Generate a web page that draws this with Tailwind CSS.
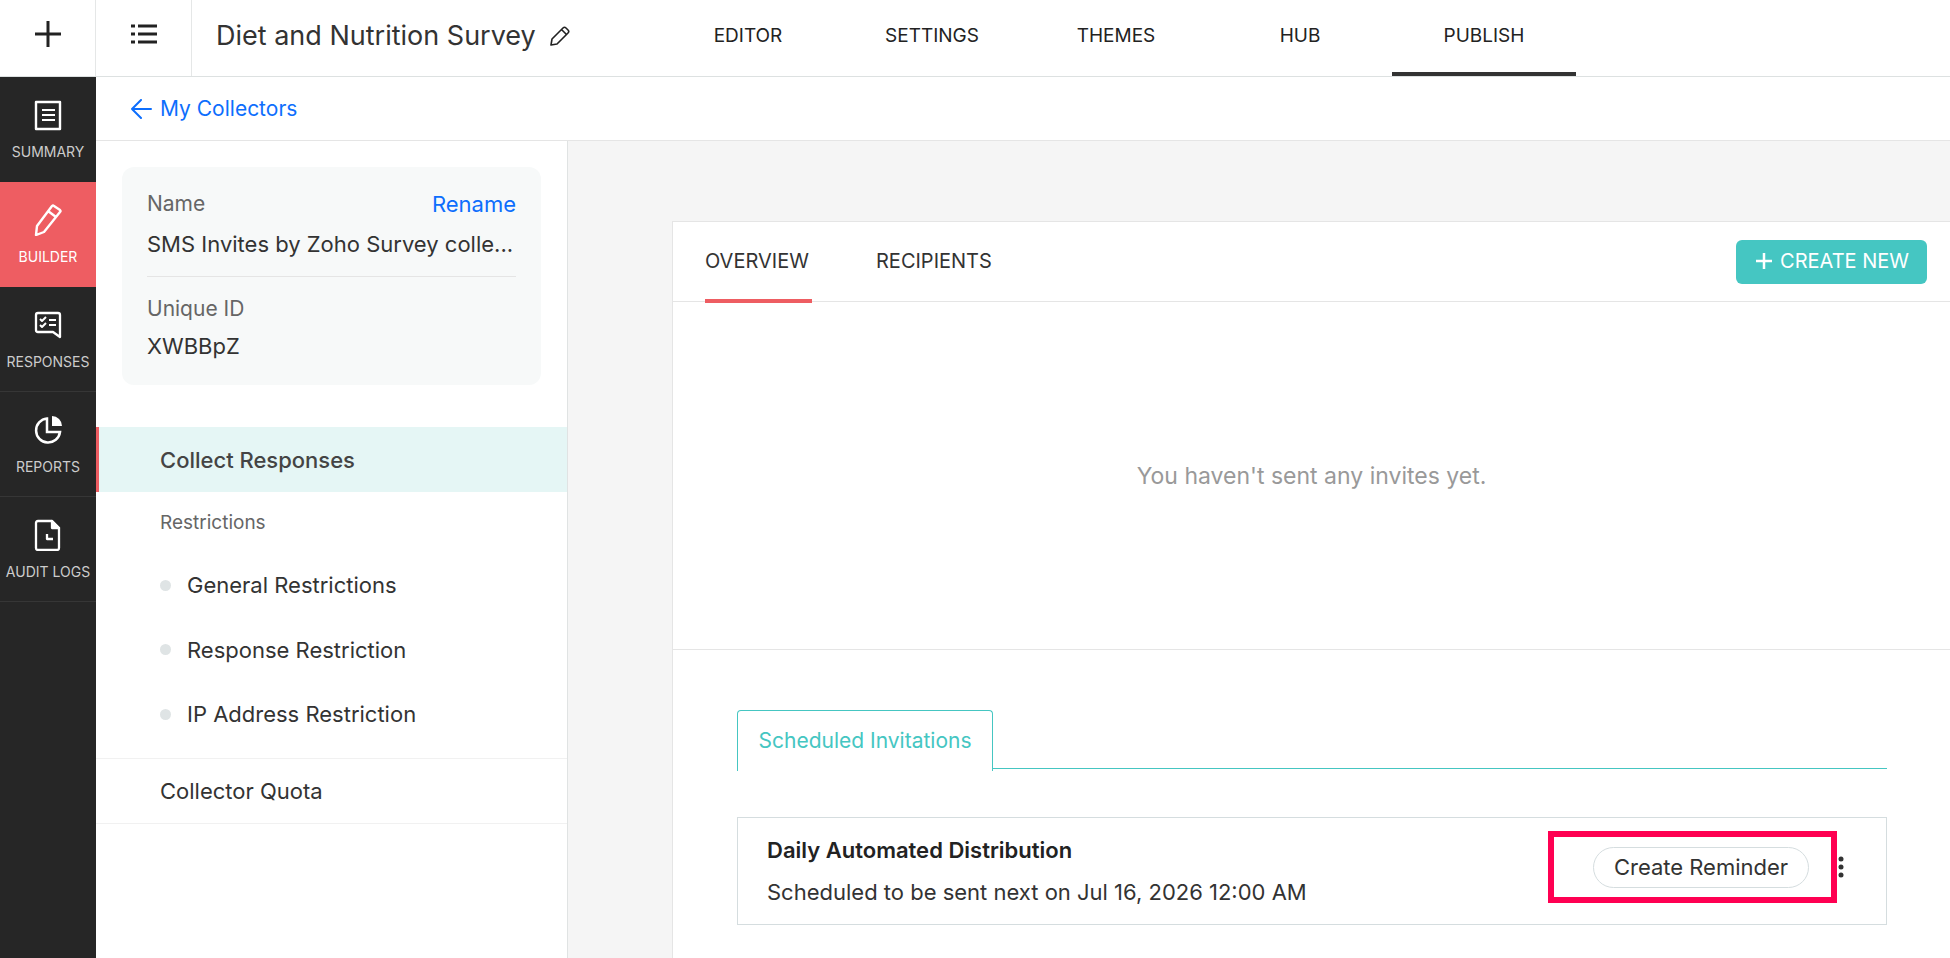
<!DOCTYPE html>
<html lang="en">
<head>
    <meta charset="UTF-8">
    <meta name="viewport" content="width=device-width, initial-scale=1.0">
    <title>Diet and Nutrition Survey</title>
    <script src="https://cdn.jsdelivr.net/npm/@tailwindcss/browser@4"></script>
</head>
<body class="min-h-screen flex flex-col bg-white font-['Inter',sans-serif] text-[22px] leading-7 text-[#333]">
    <!-- Top bar -->
    <header class="flex h-[77px] shrink-0 border-b border-[#dde1e1]">
        <button class="flex w-24 shrink-0 items-center justify-center border-r border-[#e5e7e7] pb-2" aria-label="Create">
            <svg class="h-[26px] w-[26px]" viewBox="0 0 26 26" fill="none" stroke="#222" stroke-width="3"><path d="M13 0v26M0 13h26"/></svg>
        </button>
        <button class="flex w-24 shrink-0 items-center justify-center border-r border-[#e5e7e7] pb-2" aria-label="Surveys">
            <svg class="h-5 w-[26px]" viewBox="0 0 26 20" fill="none" stroke="#222" stroke-width="3"><path d="M0 2h4M7 2h19M0 10h4M7 10h19M0 18h4M7 18h19"/></svg>
        </button>
        <div class="flex w-[464px] shrink-0 items-center gap-[14px] pb-1 pl-6">
            <h1 class="text-[27px] whitespace-nowrap">Diet and Nutrition Survey</h1>
            <button aria-label="Edit title">
                <svg class="h-5 w-5" viewBox="0 0 20 20" fill="none" stroke="#222" stroke-width="1.600" stroke-linejoin="round"><path d="M1 19l1-6L13 2q1.500-1.500 3 0l2 2q1.500 1.500 0 3L7 18zM12 4l4 4"/></svg>
            </button>
        </div>
        <nav class="flex text-[19px] text-[#222]">
            <a href="#" class="flex w-46 items-center justify-center border-b-4 border-transparent">EDITOR</a>
            <a href="#" class="flex w-46 items-center justify-center border-b-4 border-transparent">SETTINGS</a>
            <a href="#" class="flex w-46 items-center justify-center border-b-4 border-transparent">THEMES</a>
            <a href="#" class="flex w-46 items-center justify-center border-b-4 border-transparent">HUB</a>
            <a href="#" class="flex w-46 items-center justify-center border-b-4 border-[#333]">PUBLISH</a>
        </nav>
    </header>

    <div class="flex grow">
        <!-- Dark side menu -->
        <nav class="w-24 shrink-0 bg-[#262626] text-[14px] leading-5 text-[#ccc]">
            <a href="#" class="flex h-[105px] flex-col items-center gap-[11px] pt-[22px]">
                <svg class="h-8 w-8" viewBox="0 0 32 32" fill="none" stroke="#fff" stroke-width="2.400" stroke-linejoin="round"><path d="M4 3h24v27H4z"/><path d="M10 11h13M10 16h13M10 21h13" stroke-width="2"/></svg>
                SUMMARY
            </a>
            <a href="#" class="flex h-[105px] flex-col items-center gap-[11px] bg-[#ee5d62] pt-[22px] text-white">
                <svg class="h-8 w-8" viewBox="0 0 32 32" fill="none" stroke="#fff" stroke-width="2.400" stroke-linejoin="round"><path d="M4 31l1-9L20 2q1-1 2 0l6 4q1 1 0 2L12 28zM16 7l8 6"/></svg>
                BUILDER
            </a>
            <a href="#" class="flex h-[105px] flex-col items-center gap-[11px] border-b border-[#363636] pt-[22px]">
                <svg class="h-8 w-8" viewBox="0 0 32 32" fill="none" stroke="#fff" stroke-width="2.300" stroke-linejoin="round"><path d="M6 4h20q2 0 2 2v22l-7-5H6q-2 0-2-2V6q0-2 2-2z"/><path d="M8 10l2 2 4-4M8 16l2 2 4-4M17 11h7M17 16h7" stroke-width="2"/></svg>
                RESPONSES
            </a>
            <a href="#" class="flex h-[105px] flex-col items-center gap-[11px] border-b border-[#363636] pt-[22px]">
                <svg class="h-8 w-8" viewBox="0 0 32 32" fill="none" stroke="#fff" stroke-width="2.500"><path d="M15 4.500A12 12 0 1 0 28 18H15z"/><path d="M20 2a10 10 0 0 1 10 10H20z" fill="#fff" stroke="none"/></svg>
                REPORTS
            </a>
            <a href="#" class="flex h-[105px] flex-col items-center gap-[11px] border-b border-[#363636] pt-[22px]">
                <svg class="h-8 w-8" viewBox="0 0 32 32" fill="none" stroke="#fff" stroke-width="2.300" stroke-linejoin="round"><path d="M6 2h14l7 7v20q0 2-2 2H6q-2 0-2-2V4q0-2 2-2zM15 15v5h6"/><path d="M20 2v7h7z" fill="#fff"/></svg>
                <span class="whitespace-nowrap">AUDIT LOGS</span>
            </a>
        </nav>

        <div class="flex min-w-0 grow flex-col">
            <div class="flex h-16 shrink-0 items-center border-b border-[#e5e5e5] pl-[35px]">
                <a href="#" class="flex items-center gap-2 text-[21px] text-[#0d6efd]">
                    <svg class="h-5 w-[21px]" viewBox="0 0 21 20" fill="none" stroke="currentColor" stroke-width="2" stroke-linecap="round" stroke-linejoin="round"><path d="M10 1L1 10l9 9M1 10h19"/></svg>
                    My Collectors
                </a>
            </div>

            <div class="flex grow">
                <!-- Collector panel -->
                <aside class="w-[472px] shrink-0 border-r border-[#e0e3e3]">
                    <section class="mt-[26px] mr-[26px] ml-[26px] h-[218px] rounded-xl bg-[#f7f9f9] px-[25px] pt-[23px]">
                        <div class="flex items-center justify-between">
                            <span class="text-[21px] text-[#666]">Name</span>
                            <button class="text-[#0d6efd]">Rename</button>
                        </div>
                        <p class="mt-3 border-b border-[#e5e5e5] pb-[18px] whitespace-nowrap">SMS Invites by Zoho Survey colle...</p>
                        <p class="mt-[18px] text-[21px] text-[#666]">Unique ID</p>
                        <p class="mt-[9px]">XWBBpZ</p>
                    </section>

                    <nav class="mt-[42px]">
                        <a href="#" class="flex h-[65px] items-center border-l-3 border-[#ee5d62] bg-[#e5f6f5] pl-[61px] font-medium text-[#444]">Collect Responses</a>
                        <p class="flex h-[61px] items-center pl-16 text-[19px] text-[#666]">Restrictions</p>
                        <ul class="border-b border-[#f1f1f1] pb-3">
                            <li><a href="#" class="flex h-16 items-center gap-4 pl-16"><i class="h-[11px] w-[11px] rounded-full bg-[#dfe4e5]"></i>General Restrictions</a></li>
                            <li><a href="#" class="flex h-[65px] items-center gap-4 pl-16"><i class="h-[11px] w-[11px] rounded-full bg-[#dfe4e5]"></i>Response Restriction</a></li>
                            <li><a href="#" class="flex h-16 items-center gap-4 pl-16"><i class="h-[11px] w-[11px] rounded-full bg-[#dfe4e5]"></i>IP Address Restriction</a></li>
                        </ul>
                        <a href="#" class="flex h-[65px] items-center border-b border-[#f1f1f1] pl-16">Collector Quota</a>
                    </nav>
                </aside>

                <!-- Invitations -->
                <main class="flex min-w-0 grow flex-col bg-[#f5f5f5] pt-20 pl-26">
                    <section class="grow border-t border-l border-[#e5e5e5] bg-white pb-8">
                        <div class="flex h-20 items-center justify-between border-b border-[#e5e5e5] pr-[23px] pl-8">
                            <nav class="flex h-20 gap-16 text-[20px]">
                                <a href="#" class="-mb-px flex w-[107px] items-center border-b-4 border-[#ee5d62] pt-0.5 whitespace-nowrap">OVERVIEW</a>
                                <a href="#" class="-mb-px flex items-center border-b-4 border-transparent pt-0.5">RECIPIENTS</a>
                            </nav>
                            <button class="flex h-11 items-center gap-2 rounded-md bg-[#45c6c2] pr-[18px] pb-0.5 pl-5 text-[20px] text-white">
                                <svg class="h-4 w-4" viewBox="0 0 16 16" fill="none" stroke="currentColor" stroke-width="2.500"><path d="M8 0v16M0 8h16"/></svg>
                                CREATE NEW
                            </button>
                        </div>
                        <p class="flex h-[348px] items-center justify-center border-b border-[#e5e5e5] text-[23px] text-[#999]">You haven't sent any invites yet.</p>

                        <div class="mr-[63px] ml-16 pt-15">
                            <div class="h-[59px] border-b border-[#45c6c2]">
                                <button class="h-[61px] w-64 rounded-t-sm border border-b-0 border-[#45c6c2] bg-white text-[21px] text-[#45c6c2]">Scheduled Invitations</button>
                            </div>

                            <article class="mt-12 flex h-[108px] items-start justify-between border border-[#d5dddf] pt-[13px] pr-[42px] pl-[29px]">
                                <div class="pt-[5px]">
                                    <h2 class="font-semibold text-[#222]">Daily Automated Distribution</h2>
                                    <p class="mt-[14px]">Scheduled to be sent next on Jul 16, 2026 12:00 AM</p>
                                </div>
                                <div class="flex items-center gap-px">
                                    <div class="flex h-[72px] items-center border-6 border-[#ff0052] pr-[22px] pl-[39px]">
                                        <button class="h-[41px] w-[216px] rounded-full border border-[#d5dddf]">Create Reminder</button>
                                    </div>
                                    <button aria-label="More actions">
                                        <svg class="h-[22px] w-[6px]" viewBox="0 0 6 22" fill="#333"><circle cx="3" cy="3" r="2.500"/><circle cx="3" cy="11" r="2.500"/><circle cx="3" cy="19" r="2.500"/></svg>
                                    </button>
                                </div>
                            </article>
                        </div>
                    </section>
                </main>
            </div>
        </div>
    </div>
</body>
</html>
